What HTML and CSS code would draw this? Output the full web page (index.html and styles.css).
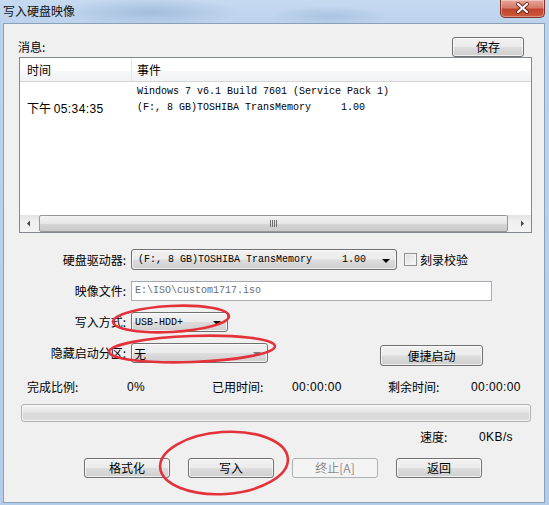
FILE: index.html
```html
<!DOCTYPE html>
<html>
<head>
<meta charset="utf-8">
<title>写入硬盘映像</title>
<link rel="stylesheet" href="styles.css">
</head>
<body>
<div class="window">
  <div class="titlebar">
    <span class="title">写入硬盘映像</span>
    <div class="close">
      <svg width="45" height="18" viewBox="0 0 45 18">
        <path d="M18 5 L27 13 M27 5 L18 13" stroke="#6b2118" stroke-width="4" stroke-linecap="round"/>
        <path d="M18 5 L27 13 M27 5 L18 13" stroke="#ffffff" stroke-width="2.2" stroke-linecap="round"/>
      </svg>
    </div>
  </div>
  <div class="client">
    <div class="msg-head">
      <span class="lbl">消息:</span>
      <div class="btn save">保存</div>
    </div>
    <div class="listview">
      <div class="lv-head">
        <div class="col1">时间</div>
        <div class="col2">事件</div>
      </div>
      <div class="lv-body">
        <div class="lv-row"><div class="col1"></div><div class="col2 mono">Windows 7 v6.1 Build 7601 (Service Pack 1)</div></div>
        <div class="lv-row"><div class="col1 time">下午 <span class="num">05:34:35</span></div><div class="col2 mono">(F:, 8 GB)TOSHIBA TransMemory     1.00</div></div>
      </div>
      <div class="hscroll">
        <div class="sb-arrow"><svg width="17" height="17" viewBox="0 0 17 17"><path d="M7 8.5 L10 5.5 L10 11.5 Z" fill="#444"/></svg></div>
        <div class="sb-track">
          <div class="sb-thumb"><span class="grip"></span></div>
        </div>
        <div class="sb-arrow"><svg width="17" height="17" viewBox="0 0 17 17"><path d="M10 8.5 L7 5.5 L7 11.5 Z" fill="#444"/></svg></div>
      </div>
    </div>

    <div class="form">
      <div class="flabel r1">硬盘驱动器:</div>
      <div class="fctl r1">
        <div class="combo combo-drive"><span class="mono">(F:, 8 GB)TOSHIBA TransMemory     1.00</span><span class="arrow"></span></div>
        <span class="check"></span><span class="check-lbl">刻录校验</span>
      </div>

      <div class="flabel">映像文件:</div>
      <div class="fctl">
        <div class="input mono">E:\ISO\custom1717.iso</div>
      </div>

      <div class="flabel">写入方式:</div>
      <div class="fctl">
        <div class="combo combo-mode"><span class="mono">USB-HDD+</span><span class="arrow"></span></div>
      </div>

      <div class="flabel">隐藏启动分区:</div>
      <div class="fctl top">
        <div class="combo combo-hide"><span class="cjk">无</span><span class="arrow light"></span></div>
        <div class="btn quick">便捷启动</div>
      </div>
    </div>

    <div class="stats">
      <span class="s1">完成比例:</span>
      <span class="s2 num">0%</span>
      <span class="s3">已用时间:</span>
      <span class="s4 num">00:00:00</span>
      <span class="s5">剩余时间:</span>
      <span class="s6 num">00:00:00</span>
    </div>

    <div class="progress"></div>

    <div class="speed">
      <span class="sp-lbl">速度:</span>
      <span class="num">0KB/s</span>
    </div>

    <div class="actions">
      <div class="btn act">格式化</div>
      <div class="btn act">写入</div>
      <div class="btn act disabled">终止[A]</div>
      <div class="btn act">返回</div>
    </div>
  </div>

  <svg class="marks" width="549" height="505" viewBox="0 0 549 505">
    <ellipse cx="171" cy="319" rx="58" ry="13" transform="rotate(-3 171 319)" fill="none" stroke="#e3323a" stroke-width="2.6"/>
    <ellipse cx="192" cy="349" rx="83" ry="13" transform="rotate(-2 192 349)" fill="none" stroke="#e3323a" stroke-width="2.6"/>
    <ellipse cx="224" cy="463" rx="64" ry="31" transform="rotate(-4 224 463)" fill="none" stroke="#e3323a" stroke-width="2.6"/>
  </svg>
</div>
</body>
</html>
```

FILE: styles.css
```css
* { box-sizing: border-box; }

html, body {
  margin: 0;
  padding: 0;
}

body {
  width: 549px;
  height: 505px;
  overflow: hidden;
  font-family: "Noto Sans CJK SC", "Liberation Sans", sans-serif;
  font-size: 12px;
  color: #000;
  background: #bcd3ec;
}

.window {
  position: relative;
  width: 549px;
  height: 505px;
  background:
    radial-gradient(ellipse 90px 14px at 150px 12px, rgba(140,170,205,0.55), rgba(140,170,205,0) 100%),
    radial-gradient(ellipse 60px 10px at 330px 16px, rgba(150,178,210,0.5), rgba(150,178,210,0) 100%),
    linear-gradient(to bottom, #c6daf0 0px, #bcd3ec 23px, #b4cce7 505px);
}

.titlebar {
  height: 23px;
  display: flex;
  align-items: flex-start;
}

.title {
  padding-left: 3px;
  line-height: 22px;
  font-size: 12px;
  color: #111;
}

.close {
  margin-left: auto;
  margin-right: 4px;
  width: 45px;
  height: 18px;
  border: 1px solid #7d3329;
  border-top: none;
  border-radius: 0 0 5px 5px;
  background: linear-gradient(to bottom, #e7a69b 0%, #d67b6a 45%, #c1432f 55%, #cf5a3e 100%);
  box-shadow: inset 0 0 0 1px rgba(255,255,255,0.35);
}

.close svg { display: block; margin: -1px 0 0 -1px; }

.client {
  margin: 0 4px 0 3px;
  height: 480px;
  border: 1px solid #8a9fb8;
  background: #f0f0f0;
}

.mono {
  font-family: "Liberation Mono", "DejaVu Sans Mono", monospace;
  font-size: 10px;
  white-space: pre;
}

.num {
  font-family: "Liberation Sans", "DejaVu Sans", sans-serif;
  font-size: 12px;
  letter-spacing: 0.4px;
}

/* message header */
.msg-head {
  display: flex;
  align-items: center;
  justify-content: space-between;
  padding: 13px 20px 0 14px;
}

.lbl { line-height: 20px; }

.btn {
  display: flex;
  align-items: center;
  justify-content: center;
  height: 20px;
  border: 1px solid #707070;
  border-radius: 3px;
  background: linear-gradient(to bottom, #f2f2f2 0%, #ebebeb 48%, #dddddd 52%, #cfcfcf 100%);
  box-shadow: inset 0 0 0 1px rgba(255,255,255,0.7);
  font-size: 12px;
  line-height: 16px;
}

.save { width: 72px; }

/* list view */
.listview {
  margin-left: 15px;
  width: 513px;
  height: 176px;
  border: 1px solid #828790;
  background: #fff;
  display: flex;
  flex-direction: column;
}

.lv-head {
  display: flex;
  height: 24px;
  border-bottom: 1px solid #d5d5d5;
  background: linear-gradient(to bottom, #ffffff 0%, #ffffff 55%, #f7f8fa 56%, #f1f2f4 100%);
}

.lv-head .col1, .lv-head .col2 {
  line-height: 23px;
  font-size: 12px;
}

.col1 {
  width: 112px;
  padding-left: 7px;
  flex: none;
}

.lv-head .col1 { border-right: 1px solid #e3e5e8; }

.col2 { padding-left: 5px; }

.lv-body { flex: 1; padding-top: 2px; }

.lv-row {
  display: flex;
  height: 16px;
  line-height: 16px;
}

.time { font-size: 12px; white-space: nowrap; }

/* horizontal scrollbar */
.hscroll {
  display: flex;
  height: 17px;
  background: linear-gradient(to bottom, #e3e3e3, #f0f0f0 40%, #f3f3f3);
}

.sb-arrow { width: 17px; height: 17px; flex: none; }
.sb-arrow svg { display: block; }

.sb-track {
  flex: 1;
  display: flex;
  padding: 0 6px 0 2px;
}

.sb-thumb {
  flex: 1;
  border: 1px solid #979797;
  border-radius: 2px;
  background: linear-gradient(to bottom, #f3f3f3 0%, #e6e6e6 50%, #d6d6d6 51%, #cbcbcb 100%);
  display: flex;
  align-items: center;
  justify-content: center;
}

.grip {
  width: 7px;
  height: 7px;
  background: repeating-linear-gradient(to right, #6f6f6f 0 1px, transparent 1px 2px);
}

/* form */
.form {
  margin-top: 16px;
  padding-left: 15px;
  display: grid;
  grid-template-columns: 107px auto;
  column-gap: 5px;
  row-gap: 11px;
}

.flabel {
  text-align: right;
  height: 20px;
  line-height: 20px;
  font-size: 12px;
  white-space: nowrap;
}

.flabel.r1 { height: 21px; line-height: 21px; }

.fctl {
  display: flex;
  align-items: center;
  height: 20px;
}

.fctl.r1 { height: 21px; }
.fctl.top { align-items: flex-start; height: 23px; }

.combo {
  position: relative;
  display: flex;
  align-items: center;
  height: 20px;
  border: 1px solid #707070;
  border-radius: 3px;
  background: linear-gradient(to bottom, #f2f2f2 0%, #ebebeb 48%, #dddddd 52%, #cfcfcf 100%);
  box-shadow: inset 0 0 0 1px rgba(255,255,255,0.7);
  padding-left: 6px;
}

.combo-drive { width: 266px; height: 21px; }
.combo-mode { width: 97px; padding-left: 3px; }
.combo-hide { width: 137px; padding-left: 2px; }

.cjk { font-size: 12px; }

.arrow {
  position: absolute;
  right: 6px;
  top: 50%;
  margin-top: -1px;
  width: 0;
  height: 0;
  border-left: 4px solid transparent;
  border-right: 4px solid transparent;
  border-top: 4px solid #000;
}

.arrow.light { border-top-color: #777; }

.check {
  margin-left: 7px;
  width: 13px;
  height: 13px;
  border: 1px solid #8f8f8f;
  background: linear-gradient(135deg, #dcdcdc, #fbfbfb);
  box-shadow: inset 0 0 0 1px #f4f4f4;
}

.check-lbl { margin-left: 3px; font-size: 12px; }

.input {
  width: 361px;
  height: 20px;
  border: 1px solid #abadb3;
  border-top-color: #a5a7ae;
  background: #fff;
  color: #6d6d6d;
  padding-left: 3px;
  line-height: 18px;
}

.quick {
  width: 103px;
  height: 21px;
  margin-left: 112px;
  margin-top: 2px;
}

/* stats */
.stats {
  margin-top: 13px;
  padding-left: 23px;
  display: flex;
  height: 16px;
  line-height: 16px;
  white-space: nowrap;
}

.s1 { width: 100px; }
.s2 { width: 85px; }
.s3 { width: 80px; }
.s4 { width: 96px; }
.s5 { width: 83px; }

.progress {
  margin: 9px 0 0 17px;
  width: 510px;
  height: 18px;
  border: 1px solid #b2b2b2;
  border-radius: 3px;
  background: linear-gradient(to bottom, #f3f3f3 0%, #e4e4e4 45%, #d9d9d9 55%, #dcdcdc 100%);
  box-shadow: inset 0 0 0 1px rgba(255,255,255,0.6);
}

.speed {
  margin-top: 7px;
  padding-left: 416px;
  display: flex;
  height: 16px;
  line-height: 16px;
}

.sp-lbl { width: 59px; }

.actions {
  margin-top: 13px;
  padding-left: 80px;
  display: flex;
  gap: 18px;
}

.act { width: 86px; }

.btn.disabled {
  border-color: #adb2b5;
  background: #f4f4f4;
  box-shadow: none;
  color: #8b8b8b;
}

.marks {
  position: absolute;
  left: 0;
  top: 0;
  pointer-events: none;
}
```
